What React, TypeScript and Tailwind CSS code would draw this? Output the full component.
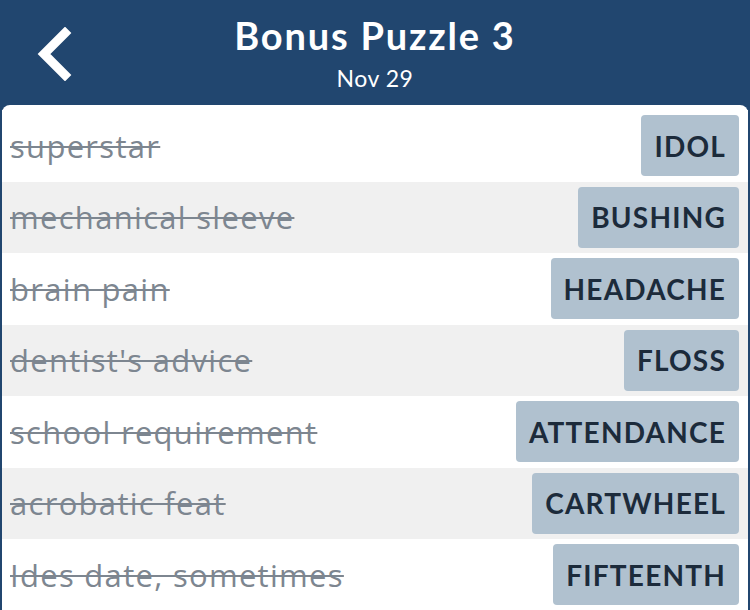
import React from "react";

const rows = [
  ["superstar", "IDOL"],
  ["mechanical sleeve", "BUSHING"],
  ["brain pain", "HEADACHE"],
  ["dentist's advice", "FLOSS"],
  ["school requirement", "ATTENDANCE"],
  ["acrobatic feat", "CARTWHEEL"],
  ["Ides date, sometimes", "FIFTEENTH"],
];

export default function App() {
  return (
    <div
      className="w-[750px] h-[610px] overflow-hidden bg-[#21466f]"
      style={{ fontFamily: "Lato, 'Open Sans', sans-serif" }}
    >
      <div className="relative h-[105px] flex flex-col items-center">
        <div className="absolute left-[34px] top-[27px]">
          <svg width="40" height="54" viewBox="0 0 40 54">
            <path d="M31 6 L10 27 L31 48" fill="none" stroke="white" strokeWidth="9" strokeLinecap="square" strokeLinejoin="miter" />
          </svg>
        </div>
        <div className="mt-[10px] text-white font-bold text-[38px] leading-[50px] tracking-[1.8px]">Bonus Puzzle 3</div>
        <div className="mt-[4px] text-white text-[23px] leading-[28px] tracking-[0.5px]">Nov 29</div>
      </div>
      <div className="mx-[2px] bg-white rounded-t-[8px] pt-[5px] h-[505px]">
        {rows.map(([clue, ans], i) => (
          <div
            key={i}
            className={`h-[71.5px] flex items-center justify-between pl-[8px] pr-[9px] ${i % 2 === 1 ? "bg-[#f0f0f0]" : "bg-white"}`}
          >
            <span
              className="text-[31px] text-[#7d8690] line-through decoration-[2px] tracking-[1.3px]"
              style={{ fontFamily: "'Open Sans', sans-serif" }}
            >
              {clue}
            </span>
            <span className="h-[61px] flex items-center px-[13px] rounded-[4px] bg-[#b0c1cf] text-[#1c2b3b] font-bold text-[28px] tracking-[1.2px]">
              {ans}
            </span>
          </div>
        ))}
      </div>
    </div>
  );
}
